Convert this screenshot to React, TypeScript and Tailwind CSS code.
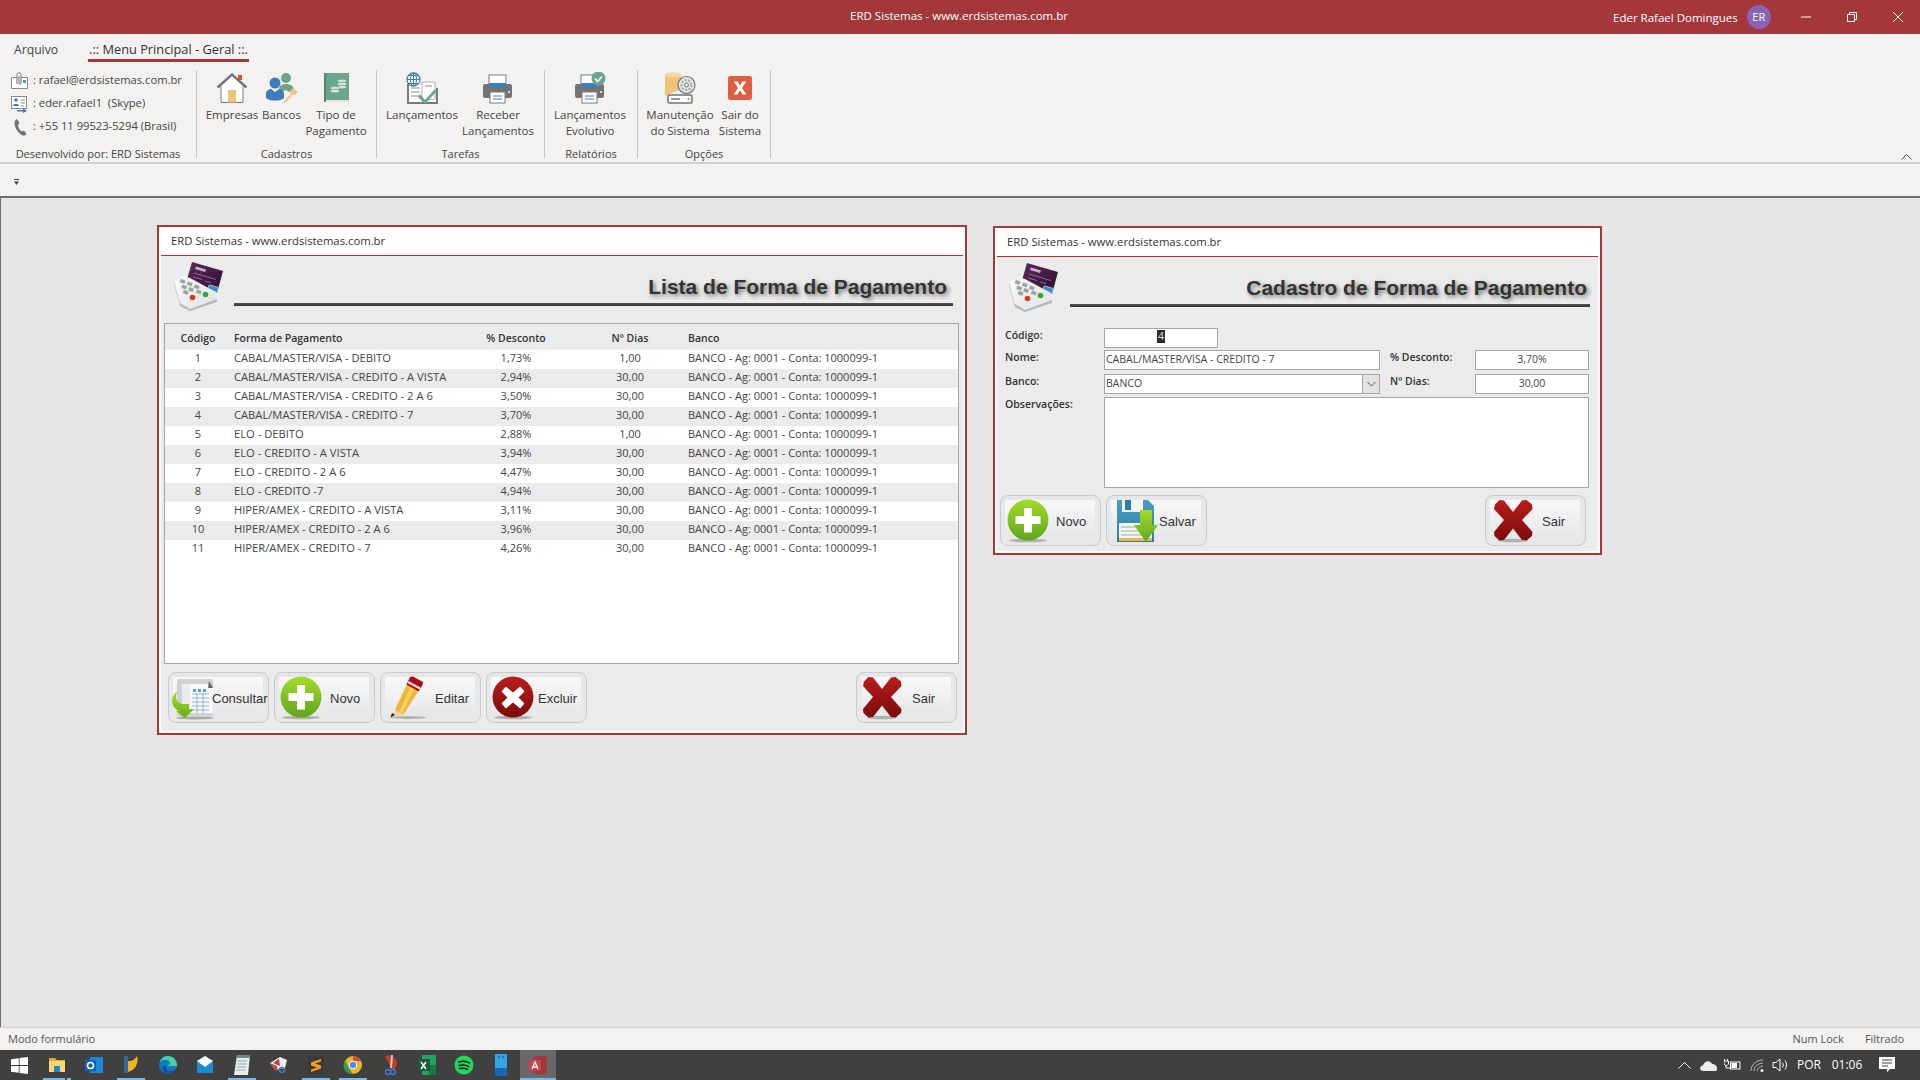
import React from "react";

type Row = { id: number; name: string; desc: string; days: string };

const rows: Row[] = [
  { id: 1, name: "CABAL/MASTER/VISA - DEBITO", desc: "1,73%", days: "1,00" },
  { id: 2, name: "CABAL/MASTER/VISA - CREDITO - A VISTA", desc: "2,94%", days: "30,00" },
  { id: 3, name: "CABAL/MASTER/VISA - CREDITO - 2 A 6", desc: "3,50%", days: "30,00" },
  { id: 4, name: "CABAL/MASTER/VISA - CREDITO - 7", desc: "3,70%", days: "30,00" },
  { id: 5, name: "ELO - DEBITO", desc: "2,88%", days: "1,00" },
  { id: 6, name: "ELO - CREDITO - A VISTA", desc: "3,94%", days: "30,00" },
  { id: 7, name: "ELO - CREDITO - 2 A 6", desc: "4,47%", days: "30,00" },
  { id: 8, name: "ELO - CREDITO -7", desc: "4,94%", days: "30,00" },
  { id: 9, name: "HIPER/AMEX - CREDITO - A VISTA", desc: "3,11%", days: "30,00" },
  { id: 10, name: "HIPER/AMEX - CREDITO - 2 A 6", desc: "3,96%", days: "30,00" },
  { id: 11, name: "HIPER/AMEX - CREDITO - 7", desc: "4,26%", days: "30,00" },
];

/* ---------- big form button icons ---------- */

const PlusIcon = () => (
  <svg width="42" height="44" viewBox="0 0 42 44">
    <defs>
      <linearGradient id="plusG" x1="0" y1="0" x2="0" y2="1">
        <stop offset="0" stopColor="#a4dc2a" />
        <stop offset="1" stopColor="#5fa51c" />
      </linearGradient>
    </defs>
    <ellipse cx="21" cy="41.5" rx="19" ry="1.8" fill="#9a9a9a" opacity="0.7" />
    <ellipse cx="21" cy="21" rx="20.5" ry="20.5" fill="url(#plusG)" />
    <path d="M17 9h8v8h8.5v8H25v8.500h-8V25H8.500v-8H17z" fill="#fff" />
  </svg>
);

const CrossIcon = () => (
  <svg width="42" height="44" viewBox="0 0 42 44">
    <defs>
      <linearGradient id="crossG" x1="0" y1="0" x2="0" y2="1">
        <stop offset="0" stopColor="#b81c1c" />
        <stop offset="1" stopColor="#7c0c0c" />
      </linearGradient>
    </defs>
    <ellipse cx="21" cy="41.500" rx="15" ry="1.800" fill="#9a9a9a" opacity="0.7" />
    <path
      d="M3 5.500 7.500 1 12 1.500 21 13 30 1.500 34.500 1 40 5.500 40.500 10 30 21 40.500 33 40 37 34.500 41.500 30 41 21 29.500 12 41 7.500 41.500 2.500 37 2 33 12 21 2 10z"
      fill="url(#crossG)"
    />
  </svg>
);

const CircleXIcon = () => (
  <svg width="42" height="44" viewBox="0 0 42 44">
    <defs>
      <linearGradient id="circG" x1="0" y1="0" x2="0" y2="1">
        <stop offset="0" stopColor="#bb1d1d" />
        <stop offset="1" stopColor="#7d0b0b" />
      </linearGradient>
    </defs>
    <ellipse cx="21" cy="41.500" rx="19" ry="1.800" fill="#9a9a9a" opacity="0.7" />
    <ellipse cx="21" cy="21" rx="20.500" ry="20.500" fill="url(#circG)" />
    <path
      d="M14 11.500 21 17.500 28 11.500 31.500 15.500 25.500 21.500 31.500 27.500 28 31.500 21 25.500 14 31.500 10.500 27.500 16.500 21.500 10.500 15.500z"
      fill="#fff"
      stroke="#fff"
      strokeLinejoin="round"
      strokeWidth="1.500"
    />
  </svg>
);

const PencilIcon = () => (
  <svg width="38" height="44" viewBox="0 0 38 44">
    <ellipse cx="19" cy="41.500" rx="18" ry="1.400" fill="#9a9a9a" opacity="0.7" />
    <path d="M6 34 18 8l12 6-16 25z" fill="#efb431" />
    <path d="M10 36 22 10l3.500 1.800L13 38z" fill="#f7d06a" />
    <path d="M17.500 8.500 21 1l3-.5 10 5.500-.5 3-4 6.500z" fill="#a40f16" />
    <path d="M19.500 5 31.500 11.500 30.500 13.500 18.500 7z" fill="#e6e3dc" />
    <path d="M6 34 14 39 1.500 41.500z" fill="#eed5a5" />
    <path d="M3 37 6 39 1.500 41.500z" fill="#222" />
  </svg>
);

const ConsultarIcon = () => (
  <svg width="44" height="44" viewBox="0 0 44 44">
    <defs>
      <linearGradient id="arrowG" x1="0" y1="0" x2="0" y2="1">
        <stop offset="0" stopColor="#a6dd28" />
        <stop offset="1" stopColor="#69ad1c" />
      </linearGradient>
    </defs>
    <ellipse cx="24" cy="42" rx="19" ry="1.500" fill="#9a9a9a" opacity="0.8" />
    <rect x="6" y="3" width="36" height="38" rx="2" fill="#d1d1d1" />
    <path d="M11 8h14v26H11z" fill="#e8ecef" />
    <path d="M19 8h20l3 4v25H19z" fill="#f6f8fa" />
    <path d="M38 5l4 7h-5z" fill="#666" />
    <g fill="#5aa0c8">
      <rect x="22" y="13" width="3" height="3" />
      <rect x="27" y="13" width="3" height="3" />
      <rect x="32" y="13" width="3" height="3" />
    </g>
    <path d="M21 18h17M21 22h17M21 26h17M21 30h17M21 34h17M26 17v20M32 17v20" stroke="#9cb6cc" strokeWidth="1" />
    <path d="M7 15C0 19-2 30 8 35H5l9 7 9-9h-5v-5h-5c-6 0-11-6-6-13z" fill="url(#arrowG)" />
  </svg>
);

const SaveIcon = () => (
  <svg width="42" height="44" viewBox="0 0 42 44">
    <defs>
      <linearGradient id="saveG" x1="0" y1="0" x2="0" y2="1">
        <stop offset="0" stopColor="#4b9dc2" />
        <stop offset="1" stopColor="#2f7ea6" />
      </linearGradient>
      <linearGradient id="saveA" x1="0" y1="0" x2="0" y2="1">
        <stop offset="0" stopColor="#a6d92c" />
        <stop offset="1" stopColor="#5ea91b" />
      </linearGradient>
    </defs>
    <path d="M1 1h31l6 6v36H1z" fill="url(#saveG)" />
    <rect x="6" y="1" width="21" height="12" fill="#f2f4f5" />
    <rect x="9" y="1" width="6" height="10" fill="#2f7ea6" />
    <rect x="3" y="24" width="33" height="18" fill="#f4f4ee" />
    <path d="M5 28h24M5 32h24M5 36h24" stroke="#b6c2c8" strokeWidth="1.500" />
    <rect x="3" y="39" width="33" height="3" fill="#eeb54b" />
    <path d="M24 11h12v15h6L30 43 18 26h6z" fill="url(#saveA)" />
  </svg>
);

const TerminalIcon = () => (
  <svg width="52" height="50" viewBox="0 0 52 50">
    <defs>
      <linearGradient id="cardG" x1="0" y1="0" x2="1" y2="1">
        <stop offset="0" stopColor="#5c2a5c" />
        <stop offset="1" stopColor="#2e0f33" />
      </linearGradient>
      <linearGradient id="termG" x1="0" y1="0" x2="1" y2="1">
        <stop offset="0" stopColor="#fafafa" />
        <stop offset="1" stopColor="#dfe2e3" />
      </linearGradient>
    </defs>
    <path d="M20 1 51 10 45 32 14 22z" fill="url(#cardG)" />
    <path d="M24 5.500l10 3-1 2.500-10-3z" fill="#c7b4c7" />
    <path d="M22 12l22 6.500M21 16l9 2.500M33 20l6 1.500" stroke="#8a6b8a" strokeWidth="1" />
    <rect x="36" y="25" width="10" height="5.500" rx="1" fill="#3f8bc9" stroke="#dfe7ee" strokeWidth="0.600" transform="rotate(17 41 28)" />
    <path d="M2 20 11 15 18 17 44 31 45 38 18 48 8 42z" fill="url(#termG)" />
    <path d="M8 42 18 48 45 38 45 41 18 50 8 45z" fill="#b4b9bd" />
    <path d="M2 20 8 42 8 45 2 24z" fill="#c9cdd0" />
    <g fill="#9ca1a4" stroke="#eef0f1" strokeWidth="0.500">
      <rect x="8" y="18.500" width="5.500" height="4" transform="rotate(20 11 20)" />
      <rect x="15" y="21" width="5.500" height="4" transform="rotate(20 18 23)" />
      <rect x="22" y="24" width="5.500" height="4" transform="rotate(20 25 26)" />
      <rect x="9.500" y="24" width="5.500" height="4" transform="rotate(20 12 26)" />
      <rect x="16.500" y="26.500" width="5.500" height="4" transform="rotate(20 19 28)" />
      <rect x="24" y="29" width="5.500" height="4" transform="rotate(20 27 31)" />
      <rect x="11" y="29.500" width="5.500" height="4" transform="rotate(20 14 31)" />
    </g>
    <circle cx="20.500" cy="36.500" r="2.800" fill="#d0401f" />
    <circle cx="33.500" cy="33.500" r="2.800" fill="#3fa635" />
  </svg>
);

/* ---------- ribbon icons ---------- */

const HouseIcon = () => (
  <svg width="32" height="32" viewBox="0 0 32 32">
    <rect x="22" y="3" width="4" height="5" fill="#d35230" />
    <path d="M4 14 16 3l12 11v17H4z" fill="#fff" />
    <path d="M5 14.500V30.500H27V14.500" fill="none" stroke="#737373" strokeWidth="1" />
    <path d="M1.500 15.500 16 2.500 30.500 15.500" fill="none" stroke="#737373" strokeWidth="2.400" />
    <rect x="12" y="18" width="8" height="12.500" fill="#ecc27a" />
  </svg>
);

const BancosIcon = () => (
  <svg width="34" height="32" viewBox="0 0 34 32">
    <circle cx="21" cy="6" r="5" fill="#69a58c" />
    <path d="M14 16c1-3 4-4 7-4s7 1 8 5l-4 3-5-2-3 2z" fill="#69a58c" />
    <circle cx="10" cy="11" r="5.500" fill="#3f7cba" />
    <path d="M1 26v-4c0-3.500 3-5 5-5l4 3 4-3c3 0 5 2 5 5v4c-2 2-5 2.500-9 2.500S3 28 1 26z" fill="#3f7cba" />
    <path d="M17 31l9-9-1-3 3-3 5 4-3 3-2.500-.5-7 8h-2l-1 1z" fill="#efc27c" />
  </svg>
);

const BookIcon = () => (
  <svg width="26" height="30" viewBox="0 0 26 30">
    <path d="M1 0h25v27H3v2H1z" fill="#6ca58e" />
    <rect x="1" y="27" width="25" height="2" fill="#e3e3e3" />
    <rect x="1" y="0" width="2" height="29" fill="#4f8b73" />
    <g fill="#d9e6e0" stroke="#6ca58e" strokeWidth="0.700">
      <ellipse cx="19" cy="8" rx="4.500" ry="1.800" />
      <ellipse cx="19" cy="11" rx="4.500" ry="1.800" />
      <ellipse cx="19" cy="14" rx="4.500" ry="1.800" />
      <ellipse cx="12" cy="15" rx="4.500" ry="1.800" />
      <ellipse cx="12" cy="18" rx="4.500" ry="1.800" />
    </g>
  </svg>
);

const LancIcon = () => (
  <svg width="32" height="32" viewBox="0 0 32 32">
    <path d="M2 12v19h29V16" fill="#fff" stroke="#7a7a7a" strokeWidth="2" />
    <path d="M16 10h13v17l-13 2z" fill="#fff" stroke="#9a9a9a" strokeWidth="0.800" />
    <path d="M5 16h9M5 20h9M5 24h9M19 14h7" stroke="#8a8a8a" strokeWidth="1" />
    <path d="M14 22l5 6 10-11 2 2-12 13-7-7z" fill="#6ca58e" />
    <circle cx="7.500" cy="7.500" r="6.500" fill="#fff" stroke="#3f7cba" strokeWidth="1.300" />
    <path d="M1 7.500h13M7.500 1v13M2.500 3.500h10M2.500 11.500h10" stroke="#3f7cba" strokeWidth="1" />
    <ellipse cx="7.500" cy="7.500" rx="3" ry="6.500" fill="none" stroke="#3f7cba" strokeWidth="1" />
  </svg>
);

const PrinterIcon = ({ check }: { check?: boolean }) => (
  <svg width="32" height="32" viewBox="0 0 32 32">
    <rect x="7" y="3" width="17" height="13" fill="#fff" stroke="#7a7a7a" strokeWidth="1" />
    <rect x="1" y="12" width="29" height="14" rx="2" fill="#737373" />
    <rect x="7" y="11" width="17" height="5" fill="#3f7cba" />
    <circle cx="27" cy="20" r="1" fill="#fff" />
    <rect x="8" y="20" width="15" height="11" fill="#fff" stroke="#7a7a7a" strokeWidth="1" />
    <path d="M11 24h9M11 27h9" stroke="#3f7cba" strokeWidth="1" />
    {check && (
      <>
        <circle cx="24.500" cy="6.500" r="7" fill="#6ca58e" />
        <path d="M21 6.500l2.500 3 4.500-5" fill="none" stroke="#fff" strokeWidth="1.600" />
      </>
    )}
  </svg>
);

const MaintIcon = () => (
  <svg width="32" height="32" viewBox="0 0 32 32">
    <path d="M1 3c0-3 16-3 16 0v14L1 24z" fill="#efc27c" />
    <ellipse cx="9" cy="3" rx="8" ry="2.500" fill="#f5d79f" />
    <rect x="4" y="23" width="24" height="8" rx="1.500" fill="#fff" stroke="#737373" strokeWidth="1.500" />
    <path d="M7 27h9" stroke="#737373" strokeWidth="1.500" />
    <circle cx="24.500" cy="27" r="1" fill="#6ca58e" />
    <circle cx="22.500" cy="13" r="8.500" fill="#e4e4e4" stroke="#737373" strokeWidth="1.200" />
    <circle cx="22.500" cy="13" r="5" fill="none" stroke="#a3a3a3" strokeWidth="2" strokeDasharray="2 1.500" />
    <circle cx="22.500" cy="13" r="2" fill="#fff" stroke="#737373" strokeWidth="1" />
  </svg>
);

const ExitIcon = () => (
  <svg width="26" height="26" viewBox="0 0 26 26">
    <rect x="1" y="1" width="24" height="24" rx="2.500" fill="#dd5f41" />
    <path d="M6.800 6.500h3.800l2.400 4 2.400-4h3.800l-4.200 6.500 4.400 6.500h-3.800L13 15.200l-2.600 4.300H6.600l4.400-6.500z" fill="#fff" />
  </svg>
);

/* ---------- contact line icons ---------- */

const ClipIcon = () => (
  <svg width="17" height="18" viewBox="0 0 17 18">
    <path d="M.5 5.500h16v11H.5z" fill="#fff" stroke="#8a8a8a" />
    <path d="M12 8h3v3h-3z" fill="#6a8fb8" />
    <path
      d="M6 12V3c0-3 4-3 4 0v8c0 1.500-2 1.500-2 0V4"
      fill="#fff"
      stroke="#6f6f6f"
      strokeWidth="1"
    />
  </svg>
);

const ContactIcon = () => (
  <svg width="17" height="18" viewBox="0 0 17 18">
    <rect x=".5" y="1.500" width="15" height="12" fill="#fff" stroke="#8a8a8a" />
    <circle cx="5" cy="5" r="1.800" fill="#3f7cba" />
    <path d="M2 11c0-3 6-3 6 0z" fill="#3f7cba" />
    <path d="M10 5h4M10 8h4M10 11h3" stroke="#8a8a8a" />
    <path d="M6 15h6v-2l4 3-4 2v-1.500H6z" fill="#3f7cba" />
  </svg>
);

const PhoneIcon = () => (
  <svg width="14" height="18" viewBox="0 0 14 18">
    <path
      d="M4 1 6.500 5 5 7c0 2 1.500 5 3.500 6.500L11 12.500 13.500 16c-1 1.500-3 2-4.500 1.200C4.500 14.500 1 8.500 1.500 4 1.800 2.500 2.800 1.300 4 1z"
      fill="#737373"
    />
  </svg>
);

/* ---------- shared pieces ---------- */

const FormButton = ({
  icon,
  label,
  iconClass,
  labelClass,
  className,
}: {
  icon: React.ReactNode;
  label: string;
  iconClass: string;
  labelClass: string;
  className?: string;
}) => (
  <div
    className={`h-[51px] w-[101px] shrink-0 rounded-[8px] border border-[#c8cacd] bg-gradient-to-b from-[#e6e7e8] to-[#e6e8ea] p-[4px] ${className || ""}`}
  >
    <div className="flex h-full w-[90px] items-center rounded-[2px] bg-gradient-to-b from-[#f8f8f8] to-[#e5e6e8]">
      <div className={`-my-2 flex shrink-0 items-start ${iconClass}`}>{icon}</div>
      <span className={`mt-[2px] whitespace-nowrap font-['Liberation_Sans',Arial,sans-serif] text-[13px] text-[#333] ${labelClass}`}>
        {label}
      </span>
    </div>
  </div>
);

const RibbonButton = ({
  icon,
  lines,
  width,
}: {
  icon: React.ReactNode;
  lines: string[];
  width: string;
}) => (
  <div className={`flex flex-col items-center pt-[2px] ${width}`}>
    <div className="flex h-[32px] items-center justify-center">{icon}</div>
    <div className="mt-[3px] text-center leading-[16px] whitespace-nowrap">
      {lines.map((line) => (
        <div key={line}>{line}</div>
      ))}
    </div>
  </div>
);

const RibbonGroup = ({
  title,
  width,
  padding,
  children,
}: {
  title: string;
  width: string;
  padding: string;
  children: React.ReactNode;
}) => (
  <div className={`flex h-[88px] flex-col border-r border-[#c8c6c4] ${width}`}>
    <div className={`flex h-[78px] shrink-0 ${padding}`}>{children}</div>
    <div className="shrink-0 text-center text-[11px] leading-[12px] text-[#444]">{title}</div>
  </div>
);

const FormHeader = () => (
  <div className="flex h-[29px] items-center border-b-[1.500px] border-[#a4373a] bg-white text-[11.300px] text-[#333]">
    <span className="pl-[10px]">ERD Sistemas - www.erdsistemas.com.br</span>
  </div>
);

const FormTitle = ({
  title,
  iconClass,
  columnClass,
  titleClass,
}: {
  title: string;
  iconClass: string;
  columnClass: string;
  titleClass: string;
}) => (
  <div className={`flex ${columnClass}`}>
    <div className={`mt-[5px] shrink-0 ${iconClass}`}>
      <TerminalIcon />
    </div>
    <div className="flex flex-1 flex-col pt-[18px]">
      <div className={`text-right font-['Liberation_Sans',Arial,sans-serif] text-[21px] leading-[26px] font-bold text-[#333] [text-shadow:2px_2px_4px_#777] ${titleClass}`}>
        {title}
      </div>
      <div className="mt-[3px] h-[3px] bg-gradient-to-b from-[#555] to-[#333]" />
    </div>
  </div>
);

const FieldLabel = ({ children, className }: { children: React.ReactNode; className: string }) => (
  <div className={`h-[14px] shrink-0 text-[10.500px] leading-[14px] font-semibold text-[#333] ${className}`}>
    {children}
  </div>
);

const Field = ({ children, className }: { children?: React.ReactNode; className: string }) => (
  <div className={`h-[20px] shrink-0 border border-[#a6a6a6] bg-white text-[10.500px] leading-[16px] text-[#444] ${className}`}>
    {children}
  </div>
);

/* ---------- forms ---------- */

const ListForm = () => (
  <div className="mt-[27px] flex h-[510px] w-[810px] shrink-0 flex-col border-2 border-[#a4373a] bg-white px-[2px] pb-[2px]">
    <FormHeader />
    <div className="flex flex-1 flex-col bg-[#ebebeb]">
      <FormTitle
        title="Lista de Forma de Pagamento"
        iconClass="mr-[10px]"
        columnClass="h-[67px] pr-[10px] pl-[11px]"
        titleClass="pr-[6px]"
      />
      <div className="ml-[3px] h-[341px] w-[795px] border border-[#a6a6a6] bg-white text-[11px] text-[#444]">
        <div className="grid h-[26px] grid-cols-[66px_228px_114px_114px_1fr] items-center bg-[#ebebeb] pt-[3px] text-[10.500px] font-semibold text-[#333]">
          <div className="text-center">Código</div>
          <div className="pl-[3px]">Forma de Pagamento</div>
          <div className="text-center">% Desconto</div>
          <div className="text-center">Nº Dias</div>
          <div className="pl-[1px]">Banco</div>
        </div>
        {rows.map((row) => (
          <div
            key={row.id}
            className={`grid h-[19px] grid-cols-[66px_228px_114px_114px_1fr] items-center pb-[2px] ${row.id % 2 === 0 ? "bg-[#ebebeb]" : "bg-white"}`}
          >
            <div className="text-center">{row.id}</div>
            <div className="pl-[3px] text-[11.200px] whitespace-nowrap">{row.name}</div>
            <div className="text-center">{row.desc}</div>
            <div className="text-center">{row.days}</div>
            <div className="pl-[1px] whitespace-nowrap">BANCO - Ag: 0001 - Conta: 1000099-1</div>
          </div>
        ))}
      </div>
      <div className="mt-[8px] flex gap-[5px] pr-[6px] pl-[7px]">
        <FormButton icon={<ConsultarIcon />} label="Consultar" iconClass="-ml-[2px]" labelClass="-ml-[3px]" />
        <FormButton icon={<PlusIcon />} label="Novo" iconClass="ml-[1px]" labelClass="ml-[8px]" />
        <FormButton icon={<PencilIcon />} label="Editar" iconClass="ml-[4px]" labelClass="ml-[8px]" />
        <FormButton icon={<CircleXIcon />} label="Excluir" iconClass="ml-[1px]" labelClass="ml-[4px]" />
        <FormButton icon={<CrossIcon />} label="Sair" iconClass="ml-0" labelClass="ml-[9px]" className="ml-auto" />
      </div>
    </div>
  </div>
);

const EditForm = () => (
  <div className="mt-[28px] ml-[26px] flex h-[329px] w-[609px] shrink-0 flex-col border-2 border-[#a4373a] bg-white px-[2px] pb-[2px]">
    <FormHeader />
    <div className="flex flex-1 flex-col bg-[#ebebeb]">
      <FormTitle
        title="Cadastro de Forma de Pagamento"
        iconClass="mr-[11px]"
        columnClass="h-[71px] pr-[8px] pl-[10px]"
        titleClass="pr-[3px]"
      />
      <div className="flex h-[20px] pl-[8px]">
        <FieldLabel className="w-[99px]">Código:</FieldLabel>
        <Field className="flex w-[114px] justify-center">
          <span className="mt-[1px] h-[13px] bg-[#2b2b2b] px-[1px] leading-[13px] text-[#ddd]">4</span>
        </Field>
      </div>
      <div className="mt-[2px] flex h-[20px] pl-[8px]">
        <FieldLabel className="w-[99px]">Nome:</FieldLabel>
        <Field className="w-[276px] pl-[1px]">CABAL/MASTER/VISA - CREDITO - 7</Field>
        <FieldLabel className="ml-[10px] w-[85px]">% Desconto:</FieldLabel>
        <Field className="w-[114px] text-center">3,70%</Field>
      </div>
      <div className="mt-[4px] flex h-[20px] pl-[8px]">
        <FieldLabel className="w-[99px]">Banco:</FieldLabel>
        <Field className="flex w-[276px] justify-between pl-[1px]">
          <span>BANCO</span>
          <span className="flex h-full w-[17px] items-center justify-center border-l border-[#a6a6a6] bg-[#e3e3e3]">
            <svg width="9" height="6" viewBox="0 0 9 6">
              <path d="M.5 1 4.500 5 8.500 1" fill="none" stroke="#444" />
            </svg>
          </span>
        </Field>
        <FieldLabel className="ml-[10px] w-[85px]">Nº Dias:</FieldLabel>
        <Field className="w-[114px] text-center">30,00</Field>
      </div>
      <div className="mt-[3px] flex h-[91px] pl-[8px]">
        <FieldLabel className="w-[99px]">Observações:</FieldLabel>
        <Field className="h-[91px] w-[485px]" />
      </div>
      <div className="mt-[7px] flex gap-[5px] pr-[12px] pl-[3px]">
        <FormButton icon={<PlusIcon />} label="Novo" iconClass="ml-[2px]" labelClass="ml-[7px]" />
        <FormButton icon={<SaveIcon />} label="Salvar" iconClass="ml-[5px]" labelClass="ml-[1px]" />
        <FormButton icon={<CrossIcon />} label="Sair" iconClass="ml-[2px]" labelClass="ml-[8px]" className="ml-auto" />
      </div>
    </div>
  </div>
);

/* ---------- taskbar icons ---------- */

const taskIcons: { icon: React.ReactNode; bar?: boolean; split?: boolean }[] = [
  {
    icon: (
      <svg width="20" height="20" viewBox="0 0 20 20">
        <path d="M2 3h6l2 2h8v3H2z" fill="#e8a93a" />
        <rect x="2" y="6" width="16" height="11" fill="#f7d774" />
        <rect x="7" y="11" width="6" height="6" fill="#1f85c9" />
      </svg>
    ),
    bar: true,
    split: true,
  },
  {
    icon: (
      <svg width="20" height="20" viewBox="0 0 20 20">
        <rect x="6" y="2" width="13" height="16" fill="#1a8ad4" />
        <rect x="1" y="5" width="11" height="11" fill="#0f62b5" />
        <circle cx="6.500" cy="10.500" r="3" fill="none" stroke="#fff" strokeWidth="1.600" />
      </svg>
    ),
  },
  {
    icon: (
      <svg width="20" height="20" viewBox="0 0 20 20">
        <path d="M3 1h4v17H3z" fill="#2f6aa8" />
        <path d="M7 6c5 0 7-2 9-5 2 6-1 14-9 16z" fill="#eeb31e" />
      </svg>
    ),
    bar: true,
  },
  {
    icon: (
      <svg width="20" height="20" viewBox="0 0 20 20">
        <circle cx="10" cy="10" r="9" fill="#0f7bbd" />
        <path d="M19 10c0-5-4-9-9-9-4 0-7 2-8 6 3-3 9-3 10 1 0 2-3 3-3 3h10z" fill="#45d0a8" />
        <path d="M8 11c0 3 2 5 5 5 2 0 4-1 5-2-2 5-8 6-12 3-2-2-2-5-1-6z" fill="#1b4f9c" />
      </svg>
    ),
  },
  {
    icon: (
      <svg width="20" height="18" viewBox="0 0 20 18">
        <rect x="2" y="4" width="16" height="13" fill="#1a8ad4" />
        <path d="M2 5 10 11 18 5 10 0z" fill="#fff" />
      </svg>
    ),
  },
  {
    icon: (
      <svg width="18" height="22" viewBox="0 0 18 22">
        <path d="M4 1h13l-2 20H1z" fill="#e9eef0" />
        <path d="M4 1h13v3H4z" fill="#6f8a8f" />
        <path d="M5 7h9M4.500 10h9M4 13h9M3.500 16h9" stroke="#92a5aa" />
      </svg>
    ),
    bar: true,
  },
  {
    icon: (
      <svg width="20" height="20" viewBox="0 0 20 20">
        <path d="M1 8 11 2l7 3-2 8-10 2z" fill="#ededed" />
        <path d="M4 8l6-4 1 7z" fill="#c8373a" />
        <path d="M1 8l5 7 3 1-1-5z" fill="#c44" />
        <circle cx="13" cy="15" r="2.500" fill="none" stroke="#3d7cc9" strokeWidth="1.500" />
      </svg>
    ),
  },
  {
    icon: (
      <svg width="20" height="20" viewBox="0 0 20 20">
        <rect x="2" y="1" width="16" height="18" fill="#3a3a3a" />
        <path d="M15 4 5 7.500V10.500L11 12.500 5 14.500V17L15 13.500V10.500L9 8.500 15 6.500z" fill="#f59e1c" />
      </svg>
    ),
    bar: true,
  },
  {
    icon: (
      <svg width="20" height="20" viewBox="0 0 20 20">
        <circle cx="10" cy="10" r="9" fill="#e8b523" />
        <path d="M10 1a9 9 0 0 1 8 5H10z" fill="#d84b3c" />
        <path d="M2 5l4 8 4 6a9 9 0 0 1-8-14z" fill="#3c9a4d" />
        <circle cx="10" cy="10" r="4.200" fill="#fff" />
        <circle cx="10" cy="10" r="3.200" fill="#4c8bf0" />
      </svg>
    ),
    bar: true,
  },
  {
    icon: (
      <svg width="20" height="22" viewBox="0 0 20 22">
        <path d="M5 2a9 9 0 0 1 12 8c0 3-2 5-5 6z" fill="#c43d25" />
        <path d="M11 1l-1 13 2 0 1-13z" fill="#c9c9c9" />
        <circle cx="8" cy="18" r="2.400" fill="none" stroke="#3d7cc9" strokeWidth="1.500" />
        <circle cx="13" cy="18" r="2.400" fill="none" stroke="#3d7cc9" strokeWidth="1.500" />
      </svg>
    ),
  },
  {
    icon: (
      <svg width="20" height="22" viewBox="0 0 20 22">
        <rect x="5" y="1" width="14" height="20" fill="#21a366" />
        <rect x="12" y="11" width="7" height="10" fill="#107c41" />
        <rect x="1" y="5" width="12" height="12" fill="#185c37" />
        <path d="M4 8l5 7M9 8l-5 7" stroke="#fff" strokeWidth="1.500" />
      </svg>
    ),
  },
  {
    icon: (
      <svg width="20" height="20" viewBox="0 0 20 20">
        <circle cx="10" cy="10" r="9.500" fill="#1ed760" />
        <path d="M4.500 7c4-1 8-1 11 1M5 10.500c3.500-1 7-.6 9.500 1M5.500 13.500c3-.7 5.500-.5 8 1" fill="none" stroke="#1a1a1a" strokeWidth="1.500" strokeLinecap="round" />
      </svg>
    ),
  },
  {
    icon: (
      <svg width="14" height="22" viewBox="0 0 14 22">
        <rect x="1" y="0" width="12" height="22" fill="#32a4e4" />
        <rect x="1" y="14" width="12" height="8" fill="#1269b5" />
        <path d="M4 3h2M8 3h2" stroke="#0c3d70" />
      </svg>
    ),
  },
];

const TrayBox = ({ children, width }: { children: React.ReactNode; width: string }) => (
  <div className={`flex h-full items-center justify-center ${width}`}>{children}</div>
);

const Taskbar = () => (
  <div className="flex h-[30px] shrink-0 items-center bg-[#404040] text-[12px] text-white">
    <div className="flex h-[30px] w-[38px] items-center justify-center">
      <svg width="17" height="17" viewBox="0 0 17 17">
        <path d="M0 2.300 7.800 1.200V8H0zM8.600 1.100 17 0v8H8.600zM0 8.900h7.800v6.900L0 14.700zM8.600 8.900H17V17l-8.400-1.100z" fill="#fff" />
      </svg>
    </div>
    {taskIcons.map((task, i) => (
      <div key={i} className="relative flex h-[30px] w-[37px] shrink-0 items-center justify-center">
        {task.icon}
        {task.bar && <span className="absolute bottom-0 h-[2px] w-[28px] bg-[#76b9ed]" />}
        {task.split && <span className="absolute right-[8px] bottom-0 h-[2px] w-[2px] bg-[#404040]" />}
      </div>
    ))}
    <div className="relative ml-[1px] flex h-[30px] w-[36px] items-center justify-center bg-[#686868]">
      <svg width="20" height="20" viewBox="0 0 20 20">
        <path d="M6 3c0-3 13-3 13 0v14c0 3-13 3-13 0z" fill="#a4373a" />
        <rect x="1" y="5" width="12" height="11" fill="#c8434a" />
        <path d="M4 14 7 7l3 7M5 12h4" fill="none" stroke="#fff" strokeWidth="1.300" />
      </svg>
      <span className="absolute bottom-0 h-[2px] w-full bg-[#76b9ed]" />
    </div>
    <div className="ml-auto flex h-full items-center pr-[13px]">
      <TrayBox width="w-[24px]">
        <svg width="13" height="8" viewBox="0 0 13 8">
          <path d="M.5 7.500 6.500 1.500 12.500 7.500" fill="none" stroke="#fff" />
        </svg>
      </TrayBox>
      <TrayBox width="w-[24px]">
        <svg width="17" height="11" viewBox="0 0 17 11">
          <path d="M3 11C-.5 11-1 6 3 5.500 4 1 10-.5 12 4c4 0 6 3 4.500 7z" fill="#eee" />
        </svg>
      </TrayBox>
      <TrayBox width="w-[24px]">
        <svg width="17" height="12" viewBox="0 0 17 12">
          <path d="M.5 0v2M3.500 0v2M0 2h4.500v3L3 6.500H1.500L0 5zM2 6.500V9h4" fill="none" stroke="#fff" />
          <rect x="6.500" y="3" width="9.500" height="7" fill="none" stroke="#fff" />
          <rect x="7.500" y="4" width="5.500" height="5" fill="#fff" />
        </svg>
      </TrayBox>
      <TrayBox width="w-[25px]">
        <svg width="14" height="13" viewBox="0 0 14 13">
          <path d="M1 12C1 6 6 1 13 1M4 12C4 8 8 4 13 4M7 12c0-2 3-5 6-5" fill="none" stroke="#bdbdbd" strokeWidth="1" />
          <circle cx="12" cy="11.500" r="1.500" fill="#fff" />
        </svg>
      </TrayBox>
      <TrayBox width="w-[22px]">
        <svg width="17" height="14" viewBox="0 0 17 14">
          <path d="M1 4.500h3L8 1v12L4 9.500H1z" fill="none" stroke="#fff" />
          <path d="M10.500 4.500c1 1.500 1 3.500 0 5M13 2.500c2 2.500 2 6.500 0 9" fill="none" stroke="#fff" />
        </svg>
      </TrayBox>
      <TrayBox width="w-[36px]">POR</TrayBox>
      <TrayBox width="w-[40px]">01:06</TrayBox>
      <TrayBox width="w-[40px]">
        <svg width="16" height="16" viewBox="0 0 16 16">
          <path d="M0 0h16v12h-5l-3 3v-3H0z" fill="#fff" />
          <path d="M3 3h10M3 6h10M3 9h6" stroke="#404040" />
        </svg>
      </TrayBox>
    </div>
  </div>
);

export default function App() {
  return (
    <div className="flex h-[1080px] w-[1920px] flex-col overflow-hidden bg-[#e6e6e6] font-['Open_Sans','Noto_Sans',sans-serif] text-[11.500px] text-[#444]">
      {/* title bar */}
      <div className="flex h-[34px] shrink-0 items-center bg-[#a4373a] text-[11.500px] text-white">
        <div className="w-[1613px] pb-[2px] pl-[305px] text-center">ERD Sistemas - www.erdsistemas.com.br</div>
        <span className="pt-[2px] whitespace-nowrap">Eder Rafael Domingues</span>
        <span className="ml-[9px] flex h-[24px] w-[24px] items-center justify-center rounded-full bg-[#8764b8] text-[11px]">ER</span>
        <div className="ml-[30px] flex items-center gap-[36px]">
          <svg width="10" height="10" viewBox="0 0 10 10">
            <path d="M0 5h10" stroke="#fff" />
          </svg>
          <svg width="10" height="10" viewBox="0 0 10 10">
            <path d="M.5 2.500h7v7h-7zM2.500 2.500v-2h7v7h-2" fill="none" stroke="#fff" />
          </svg>
          <svg width="10" height="10" viewBox="0 0 10 10">
            <path d="M0 0l10 10M10 0 0 10" stroke="#fff" />
          </svg>
        </div>
      </div>

      {/* tabs */}
      <div className="flex h-[28px] shrink-0 items-end bg-[#f3f2f1] text-[#444]">
        <div className="ml-[14px] h-[28px] w-[74px] pt-[7px] text-[12.200px] leading-[18px]">Arquivo</div>
        <div className="h-[28px] w-[161px] border-b-[3px] border-[#a4373a] pt-[6px] text-center text-[12.800px] leading-[18px] whitespace-nowrap text-[#333]">
          .:: Menu Principal - Geral ::.
        </div>
      </div>

      {/* ribbon */}
      <div className="flex h-[102px] shrink-0 items-start border-b-2 border-[#d2d0ce] bg-[#f3f2f1] pt-[8px]">
        <RibbonGroup title="Desenvolvido por: ERD Sistemas" width="w-[197px]" padding="">
          <div className="-mt-[1px] flex flex-col pl-[11px] text-[11.200px] whitespace-nowrap">
            <div className="flex h-[23px] items-center"><span className="flex w-[22px]"><ClipIcon /></span>: rafael@erdsistemas.com.br</div>
            <div className="flex h-[23px] items-center"><span className="flex w-[22px]"><ContactIcon /></span>: eder.rafael1&nbsp; (Skype)</div>
            <div className="flex h-[23px] items-center"><span className="flex w-[22px] pl-[2px]"><PhoneIcon /></span>: +55 11 99523-5294 (Brasil)</div>
          </div>
        </RibbonGroup>
        <RibbonGroup title="Cadastros" width="w-[180px]" padding="pl-[8px]">
          <RibbonButton icon={<HouseIcon />} lines={["Empresas"]} width="w-[54px]" />
          <RibbonButton icon={<BancosIcon />} lines={["Bancos"]} width="w-[45px]" />
          <RibbonButton icon={<BookIcon />} lines={["Tipo de", "Pagamento"]} width="w-[64px]" />
        </RibbonGroup>
        <RibbonGroup title="Tarefas" width="w-[168px]" padding="pl-[4px]">
          <RibbonButton icon={<LancIcon />} lines={["Lançamentos"]} width="w-[82px]" />
          <RibbonButton icon={<PrinterIcon />} lines={["Receber", "Lançamentos"]} width="w-[70px]" />
        </RibbonGroup>
        <RibbonGroup title="Relatórios" width="w-[93px]" padding="pl-[4px]">
          <RibbonButton icon={<PrinterIcon check />} lines={["Lançamentos", "Evolutivo"]} width="w-[82px]" />
        </RibbonGroup>
        <RibbonGroup title="Opções" width="w-[133px]" padding="pl-[6px]">
          <RibbonButton icon={<MaintIcon />} lines={["Manutenção", "do Sistema"]} width="w-[72px]" />
          <RibbonButton icon={<ExitIcon />} lines={["Sair do", "Sistema"]} width="w-[48px]" />
        </RibbonGroup>
        <svg className="mt-[84px] ml-auto mr-[8px]" width="11" height="6" viewBox="0 0 11 6">
          <path d="M.5 5.500 5.500 .5 10.500 5.500" fill="none" stroke="#444" />
        </svg>
      </div>

      {/* quick access toolbar */}
      <div className="flex h-[32px] shrink-0 items-center bg-[#f3f2f1] pt-[4px] pl-[14px]">
        <svg width="5" height="7" viewBox="0 0 5 7">
          <path d="M0 0h5v1H0zM0 2.500h5L2.500 6z" fill="#444" />
        </svg>
      </div>

      {/* workspace */}
      <div className="flex flex-1 items-start border-t-2 border-l border-[#6d6d6d] bg-[#e6e6e6] pl-[156px]">
        <ListForm />
        <EditForm />
      </div>

      {/* status bar */}
      <div className="flex h-[23px] shrink-0 items-center border-t border-[#d2d0ce] bg-[#f3f2f1] pr-[16px] pl-[8px] text-[11px] text-[#555]">
        <span>Modo formulário</span>
        <span className="ml-auto">Num Lock</span>
        <span className="ml-[21px]">Filtrado</span>
      </div>

      <Taskbar />
    </div>
  );
}
